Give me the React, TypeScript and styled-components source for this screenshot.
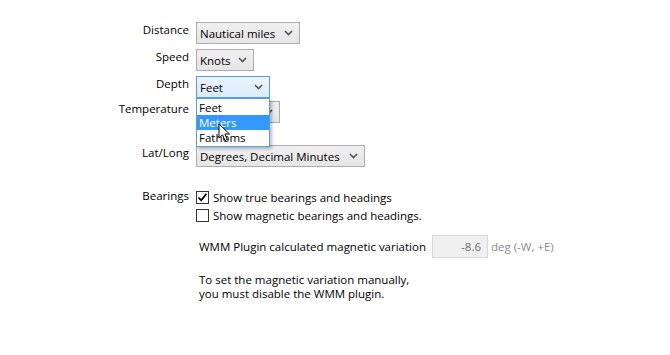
import React from 'react';
import styled, { createGlobalStyle } from 'styled-components';

const GlobalStyle = createGlobalStyle`
  html, body {
    margin: 0;
    padding: 0;
    background: #ffffff;
  }
  body {
    font-family: 'Open Sans', 'Noto Sans', sans-serif;
    font-size: 11.5px;
    color: #000;
  }
`;

const Page = styled.div`
  width: 670px;
  height: 355px;
  background: #fff;
  padding: 22px 0 0 0;
  box-sizing: border-box;
`;

const Form = styled.div`
  display: grid;
  grid-template-columns: 189px auto;
  column-gap: 7px;
  align-items: start;
`;

const Label = styled.div`
  text-align: right;
  line-height: 16px;
  white-space: nowrap;
`;

const Cell = styled.div<{ $mb?: number }>`
  position: relative;
  margin-bottom: ${(p) => (p.$mb === undefined ? 5 : p.$mb)}px;
`;

const Select = styled.div<{ $w: number; $focus?: boolean }>`
  box-sizing: border-box;
  width: ${(p) => p.$w}px;
  height: 22px;
  display: flex;
  align-items: center;
  justify-content: space-between;
  padding: 0 6px 0 3px;
  border: 1px solid ${(p) => (p.$focus ? '#569de5' : '#adadad')};
  background: ${(p) =>
    p.$focus ? 'linear-gradient(#eaf4fc, #dcecfc)' : 'linear-gradient(#f0f0f0, #e5e5e5)'};
  white-space: nowrap;
`;

const Chevron = () => (
  <svg width="9" height="6" viewBox="0 0 9 6">
    <path d="M1 1 L4.5 4.5 L8 1" fill="none" stroke="#555" strokeWidth="1.6" />
  </svg>
);

const Dropdown = styled.div`
  position: absolute;
  left: 0;
  top: 22px;
  width: 74px;
  box-sizing: border-box;
  border: 1px solid #569de5;
  background: #fff;
  padding: 1px 0;
  z-index: 2;
  box-shadow: 2px 2px 3px rgba(0, 0, 0, 0.25);
`;

const Option = styled.div<{ $active?: boolean }>`
  height: 15px;
  line-height: 15px;
  padding-left: 2px;
  background: ${(p) => (p.$active ? '#3399ff' : 'transparent')};
  color: ${(p) => (p.$active ? '#fff' : '#000')};
`;

const Cursor = styled.svg`
  position: absolute;
  left: 21px;
  top: 24px;
`;

const CheckRow = styled.label`
  display: flex;
  align-items: center;
  gap: 4px;
  height: 18px;
  white-space: nowrap;
`;

const Box = styled.span`
  box-sizing: border-box;
  width: 13px;
  height: 13px;
  border: 1px solid #333;
  background: #fff;
  display: flex;
  align-items: center;
  justify-content: center;
`;

const Indent = styled.div`
  padding-left: 3px;
`;

const VarRow = styled.div`
  display: flex;
  align-items: center;
  margin-top: 11px;
  white-space: nowrap;
`;

const VarInput = styled.div`
  box-sizing: border-box;
  margin-left: 6px;
  width: 56px;
  height: 23px;
  border: 1px solid #d9d9d9;
  background: #f0f0f0;
  color: #6d6d6d;
  text-align: right;
  padding-right: 6px;
  line-height: 21px;
`;

const Unit = styled.span`
  margin-left: 3px;
  color: #8d8d8d;
`;

const Note = styled.div`
  margin-top: 15px;
  line-height: 14px;
`;

export default function App() {
  return (
    <Page>
      <GlobalStyle />
      <Form>
        <Label>Distance</Label>
        <Cell>
          <Select $w={104}>
            Nautical miles <Chevron />
          </Select>
        </Cell>

        <Label>Speed</Label>
        <Cell>
          <Select $w={58}>
            Knots <Chevron />
          </Select>
        </Cell>

        <Label>Depth</Label>
        <Cell $mb={3}>
          <Select $w={74} $focus>
            Feet <Chevron />
          </Select>
          <Dropdown>
            <Option>Feet</Option>
            <Option $active>Meters</Option>
            <Option>Fathoms</Option>
            <Cursor width="14" height="20" viewBox="0 0 14 20">
              <path
                d="M1 1 L1 15 L4.5 11.8 L7 17.5 L9.3 16.5 L6.9 11 L11.5 11 Z"
                fill="#fff"
                stroke="#000"
                strokeWidth="1"
                strokeLinejoin="round"
              />
            </Cursor>
          </Dropdown>
        </Cell>

        <Label>Temperature</Label>
        <Cell $mb={22}>
          <Select $w={84}>
            <span />
            <Chevron />
          </Select>
        </Cell>

        <Label>Lat/Long</Label>
        <Cell $mb={21}>
          <Select $w={169}>
            Degrees, Decimal Minutes <Chevron />
          </Select>
        </Cell>

        <Label>Bearings</Label>
        <Cell>
          <CheckRow>
            <Box>
              <svg width="11" height="11" viewBox="0 0 11 11">
                <path d="M1.5 5.5 L4.2 8.3 L9.5 1.8" fill="none" stroke="#000" strokeWidth="1.8" />
              </svg>
            </Box>
            Show true bearings and headings
          </CheckRow>
          <CheckRow>
            <Box />
            Show magnetic bearings and headings.
          </CheckRow>
          <Indent>
            <VarRow>
              WMM Plugin calculated magnetic variation
              <VarInput>-8.6</VarInput>
              <Unit>deg (-W, +E)</Unit>
            </VarRow>
            <Note>
              To set the magnetic variation manually,
              <br />
              you must disable the WMM plugin.
            </Note>
          </Indent>
        </Cell>
      </Form>
    </Page>
  );
}
